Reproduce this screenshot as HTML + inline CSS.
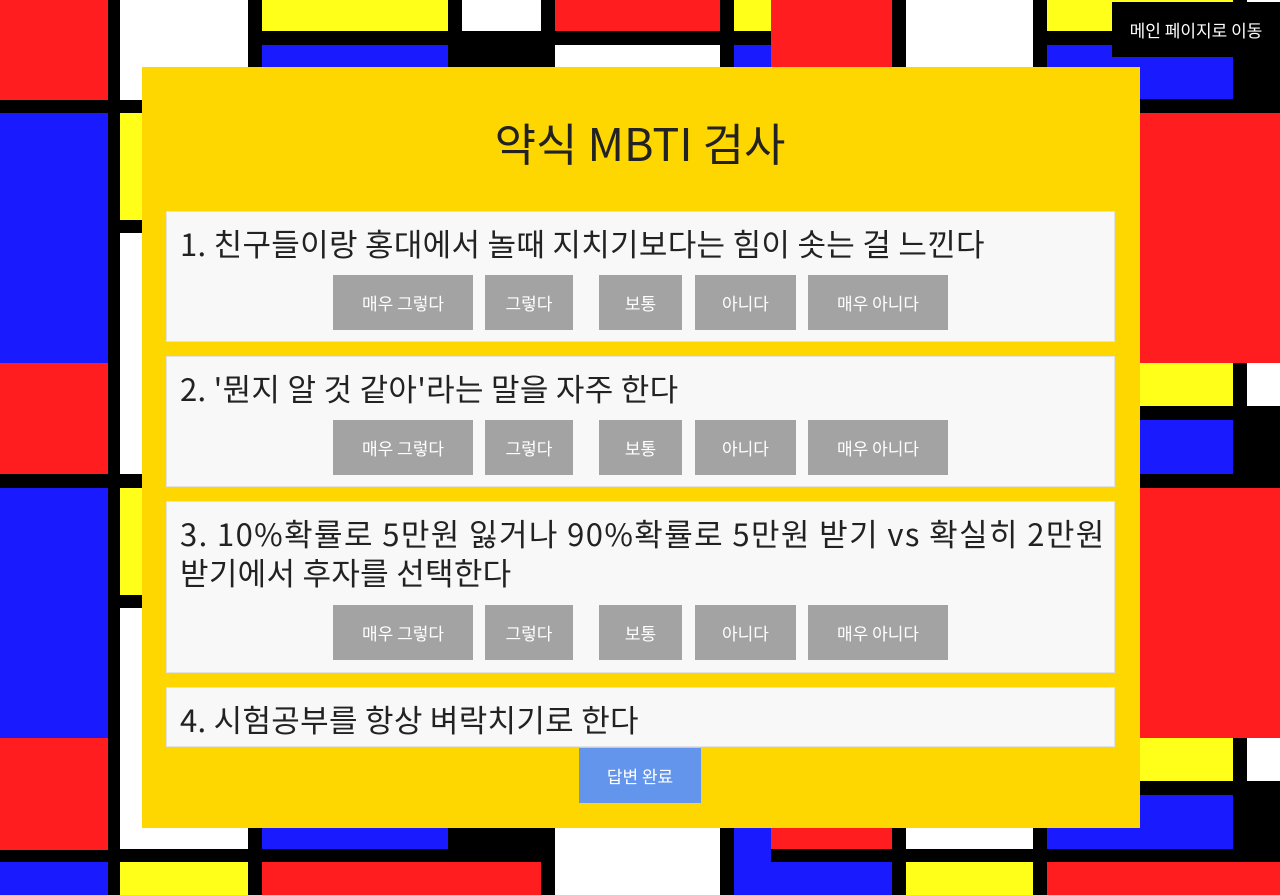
<!DOCTYPE html>
<html><head><meta charset="utf-8"><style>
*{margin:0;padding:0;box-sizing:border-box}
body{width:1280px;height:895px;overflow:hidden;position:relative;background:#000;font-family:"Liberation Sans","Noto Sans CJK KR",sans-serif}
.r{position:absolute}
.R{background:#ff1d1f}.B{background:#1a1aff}.Y{background:#ffff1a}.W{background:#fff}
#panel{position:absolute;left:142px;top:67px;width:998px;height:761px;background:#ffd700}
h1{position:absolute;left:0;width:100%;top:112px;text-align:center;font-weight:400;font-size:45px;color:#222;line-height:60px;font-family:"Noto Sans CJK KR",sans-serif}
.q{position:absolute;left:166px;width:949px;background:#f8f8f8;border:1px solid #e2e2e2}
.q p{position:absolute;left:13px;top:11px;font-size:31px;line-height:39px;color:#222;font-family:"Noto Sans CJK KR",sans-serif;white-space:nowrap;letter-spacing:0.3px}
.bt{position:absolute;height:55px;background:#a3a3a3;color:#fff;font-size:17px;line-height:55px;text-align:center;font-family:"Noto Sans CJK KR",sans-serif}
</style></head><body>
<!-- top -->
<div class="r R" style="left:0;top:0;width:108px;height:100px"></div>
<div class="r W" style="left:120px;top:0;width:128px;height:100px"></div>
<div class="r Y" style="left:262px;top:0;width:186px;height:31px"></div>
<div class="r B" style="left:262px;top:45px;width:186px;height:30px"></div>
<div class="r W" style="left:462px;top:0;width:79px;height:31px"></div>
<div class="r R" style="left:555px;top:0;width:165px;height:31px"></div>
<div class="r W" style="left:555px;top:45px;width:165px;height:30px"></div>
<div class="r Y" style="left:734px;top:0;width:37px;height:31px"></div>
<div class="r B" style="left:734px;top:45px;width:37px;height:30px"></div>
<div class="r R" style="left:771px;top:0;width:121px;height:75px"></div>
<div class="r W" style="left:906px;top:0;width:127px;height:75px"></div>
<div class="r Y" style="left:1047px;top:0;width:186px;height:31px"></div>
<div class="r B" style="left:1047px;top:45px;width:186px;height:54px"></div>
<div class="r W" style="left:1247px;top:0;width:33px;height:3px"></div>
<!-- left -->
<div class="r B" style="left:0;top:113px;width:108px;height:250px"></div>
<div class="r R" style="left:0;top:363px;width:108px;height:111px"></div>
<div class="r B" style="left:0;top:488px;width:108px;height:250px"></div>
<div class="r R" style="left:0;top:738px;width:108px;height:112px"></div>
<div class="r B" style="left:0;top:862px;width:108px;height:33px"></div>
<div class="r Y" style="left:120px;top:113px;width:30px;height:107px"></div>
<div class="r W" style="left:120px;top:233px;width:30px;height:241px"></div>
<div class="r Y" style="left:120px;top:488px;width:30px;height:107px"></div>
<div class="r W" style="left:120px;top:608px;width:128px;height:241px"></div>
<div class="r Y" style="left:120px;top:862px;width:128px;height:33px"></div>
<!-- right -->
<div class="r R" style="left:1130px;top:113px;width:150px;height:250px"></div>
<div class="r Y" style="left:1130px;top:363px;width:103px;height:43px"></div>
<div class="r W" style="left:1247px;top:363px;width:33px;height:43px"></div>
<div class="r B" style="left:1130px;top:420px;width:103px;height:54px"></div>
<div class="r R" style="left:1130px;top:488px;width:150px;height:250px"></div>
<div class="r Y" style="left:1130px;top:738px;width:103px;height:43px"></div>
<div class="r W" style="left:1247px;top:738px;width:33px;height:43px"></div>
<div class="r B" style="left:1047px;top:795px;width:186px;height:54px"></div>
<div class="r R" style="left:1047px;top:862px;width:233px;height:33px"></div>
<!-- bottom -->
<div class="r B" style="left:262px;top:800px;width:186px;height:49px"></div>
<div class="r R" style="left:262px;top:862px;width:279px;height:33px"></div>
<div class="r W" style="left:555px;top:800px;width:165px;height:95px"></div>
<div class="r B" style="left:734px;top:800px;width:37px;height:95px"></div>
<div class="r R" style="left:771px;top:800px;width:121px;height:49px"></div>
<div class="r B" style="left:771px;top:862px;width:121px;height:33px"></div>
<div class="r W" style="left:906px;top:800px;width:127px;height:49px"></div>
<div class="r Y" style="left:906px;top:862px;width:127px;height:33px"></div>

<div class="r" style="left:1112px;top:2px;width:168px;height:55px;background:#000;color:#fff;font-size:17px;line-height:55px;text-align:center;font-family:'Noto Sans CJK KR',sans-serif">메인 페이지로 이동</div>

<div id="panel"></div>
<h1>약식 MBTI 검사</h1>

<div class="q" style="top:211px;height:131px"><p>1. 친구들이랑 홍대에서 놀때 지치기보다는 힘이 솟는 걸 느낀다</p></div>
<div class="q" style="top:356px;height:131px"><p>2. '뭔지 알 것 같아'라는 말을 자주 한다</p></div>
<div class="q" style="top:501px;height:172px"><p><span style="letter-spacing:1.4px">3. 10%확률로 5만원 잃거나 90%확률로 5만원 받기 vs 확실히 2만원</span><br>받기에서 후자를 선택한다</p></div>
<div class="q" style="top:687px;height:60px"><p>4. 시험공부를 항상 벼락치기로 한다</p></div>

<div class="bt" style="left:333px;top:275px;width:140px">매우 그렇다</div>
<div class="bt" style="left:485px;top:275px;width:88px">그렇다</div>
<div class="bt" style="left:599px;top:275px;width:83px">보통</div>
<div class="bt" style="left:695px;top:275px;width:101px">아니다</div>
<div class="bt" style="left:808px;top:275px;width:140px">매우 아니다</div>

<div class="bt" style="left:333px;top:420px;width:140px">매우 그렇다</div>
<div class="bt" style="left:485px;top:420px;width:88px">그렇다</div>
<div class="bt" style="left:599px;top:420px;width:83px">보통</div>
<div class="bt" style="left:695px;top:420px;width:101px">아니다</div>
<div class="bt" style="left:808px;top:420px;width:140px">매우 아니다</div>

<div class="bt" style="left:333px;top:605px;width:140px">매우 그렇다</div>
<div class="bt" style="left:485px;top:605px;width:88px">그렇다</div>
<div class="bt" style="left:599px;top:605px;width:83px">보통</div>
<div class="bt" style="left:695px;top:605px;width:101px">아니다</div>
<div class="bt" style="left:808px;top:605px;width:140px">매우 아니다</div>

<div class="bt" style="left:579px;top:748px;width:122px;background:#6495ed">답변 완료</div>
</body></html>
